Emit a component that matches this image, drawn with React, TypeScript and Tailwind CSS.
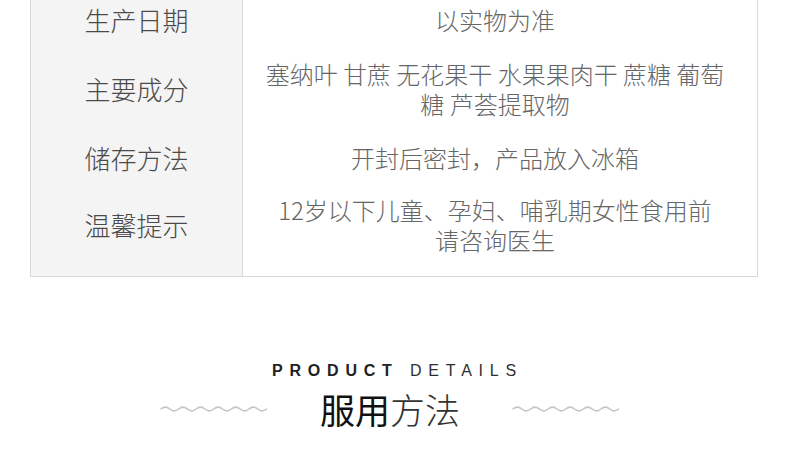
import React from 'react';

const cjk = { fontFamily: '"Noto Sans CJK SC", "Noto Sans", sans-serif' };

const rows = [
  { label: '生产日期', lines: ['以实物为准'], pad: 'pt-[5px] pb-[12px]' },
  { label: '主要成分', lines: ['塞纳叶 甘蔗 无花果干 水果果肉干 蔗糖 葡萄', '糖 芦荟提取物'], pad: 'py-[12px]' },
  { label: '储存方法', lines: ['开封后密封，产品放入冰箱'], pad: 'py-[12px]' },
  { label: '温馨提示', lines: ['12岁以下儿童、孕妇、哺乳期女性食用前', '请咨询医生'], pad: 'pt-[10px] pb-[21px]' },
];

function Wave() {
  // 6 soft waves, light grey
  let d = 'M1 5';
  for (let i = 0; i < 6; i++) {
    const x = 1 + i * 17.6;
    d += ` Q${x + 4.4} 1.2 ${x + 8.8} 5 T${x + 17.6} 5`;
  }
  return (
    <svg width="108" height="10" viewBox="0 0 108 10" className="shrink-0">
      <path d={d} fill="none" stroke="#c6c6c6" strokeWidth="1.6" strokeLinecap="round" />
    </svg>
  );
}

export default function App() {
  return (
    <div className="w-[790px] h-[466px] bg-white overflow-hidden" style={cjk}>
      <div className="ml-[30px] w-[728px] border-x border-b border-[#d9d9d9]">
        {rows.map((r) => (
          <div key={r.label} className="grid grid-cols-[212px_1fr]">
            <div className={`bg-[#f4f4f4] border-r border-[#d9d9d9] flex items-center justify-center ${r.pad}`}>
              <span className="text-[26px] leading-[30px] text-[#4a4a4a] font-light">{r.label}</span>
            </div>
            <div className={`flex items-center justify-center ${r.pad}`}>
              <p className="text-[24px] leading-[30px] text-[#666] whitespace-nowrap font-light text-center pr-[10px]">
                {r.lines.map((l, i) => (
                  <React.Fragment key={l}>
                    {i > 0 && <br />}
                    {l}
                  </React.Fragment>
                ))}
              </p>
            </div>
          </div>
        ))}
      </div>

      <div className="mt-[84px] flex justify-center">
        <p
          className="text-[16px] leading-[20px] tracking-[6.8px] text-[#222] pl-[5px]"
          style={{ fontFamily: '"Liberation Sans", Arial, sans-serif' }}
        >
          <span className="font-bold">PRODUCT</span> <span className="text-[#2e2e2e]">DETAILS</span>
        </p>
      </div>

      <div className="mt-[8px] flex items-center justify-center gap-[52px] pr-[10px]">
        <Wave />
        <h2 className="text-[35px] leading-[40px] whitespace-nowrap">
          <span className="text-[#111] font-normal">服用</span>
          <span className="text-[#333] font-extralight">方法</span>
        </h2>
        <Wave />
      </div>
    </div>
  );
}
